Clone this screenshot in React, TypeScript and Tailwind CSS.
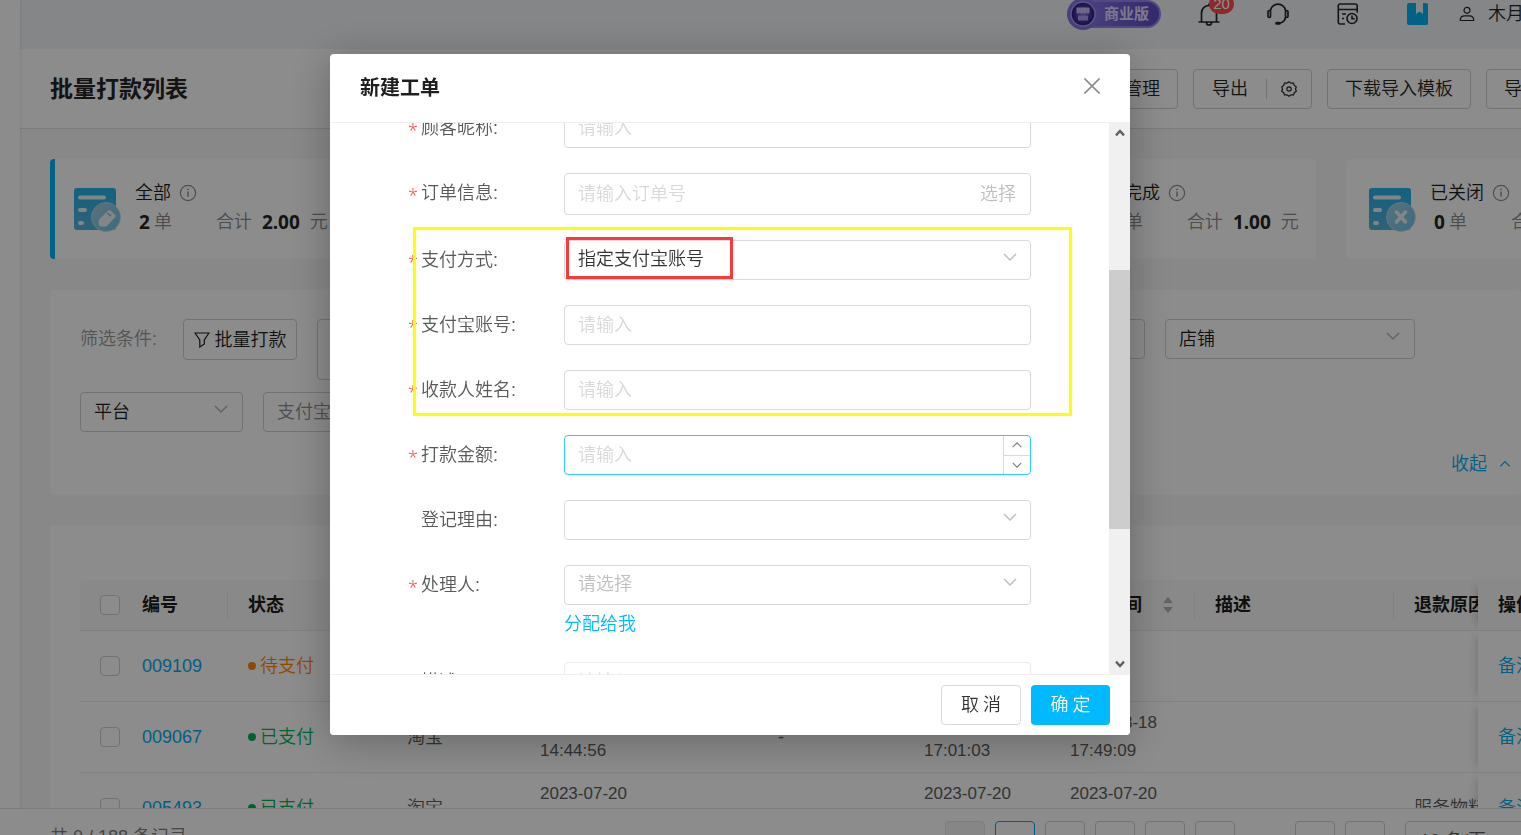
import type { ReactNode } from "react";

interface StatProps {
  label: string;
  count: string;
  total: string;
  kind: "tag" | "clock" | "check" | "close";
  active?: boolean;
}

interface Order {
  id: string;
  status: string;
  color: string;
  platform: string;
  created: string[];
  amount: string;
  paid: string[];
  finished: string[];
  reason: string;
}

const stats: StatProps[] = [
  { label: "全部", count: "2", total: "2.00", kind: "tag", active: true },
  { label: "待支付", count: "1", total: "1.00", kind: "clock" },
  { label: "支付中", count: "0", total: "0.00", kind: "clock" },
  { label: "已完成", count: "1", total: "1.00", kind: "check" },
  { label: "已关闭", count: "0", total: "0.00", kind: "close" },
];

const orders: Order[] = [
  {
    id: "009109",
    status: "待支付",
    color: "text-[#ff8800]",
    platform: "淘宝",
    created: ["2023-08-21", "10:12:30"],
    amount: "-",
    paid: [],
    finished: [],
    reason: "",
  },
  {
    id: "009067",
    status: "已支付",
    color: "text-[#00b456]",
    platform: "淘宝",
    created: ["2023-08-18", "14:44:56"],
    amount: "-",
    paid: ["2023-08-18", "17:01:03"],
    finished: ["2023-08-18", "17:49:09"],
    reason: "",
  },
  {
    id: "005493",
    status: "已支付",
    color: "text-[#00b456]",
    platform: "淘宝",
    created: ["2023-07-20", "11:20:18"],
    amount: "",
    paid: ["2023-07-20", "11:25:40"],
    finished: ["2023-07-20", "11:26:02"],
    reason: "服务物料",
  },
];

const fieldClass =
  "block h-10 w-full rounded border border-[#d9d9d9] bg-white px-[13px] text-[#333] placeholder:text-[#d9d9d9] outline-none";
const toolButton =
  "flex h-10 shrink-0 items-center rounded border border-[#d2d2d2] bg-white px-[17px]";

function Chevron({ up, className }: { up?: boolean; className?: string }) {
  return (
    <svg viewBox="0 0 14 10" fill="none" stroke="currentColor" strokeWidth="1.5" className={className}>
      <path d={up ? "M1 8l6-6 6 6" : "M1 2l6 6 6-6"} />
    </svg>
  );
}

function InfoIcon() {
  return (
    <svg viewBox="0 0 18 18" fill="none" stroke="#8f8f8f" className="size-[18px]">
      <circle cx="9" cy="9" r="7.6" strokeWidth="1.2" />
      <path d="M9 7.6v5.2" strokeWidth="1.4" />
      <circle cx="9" cy="5.3" r=".9" fill="#8f8f8f" stroke="none" />
    </svg>
  );
}

function StatIcon({ kind }: { kind: StatProps["kind"] }) {
  return (
    <svg viewBox="0 0 48 46" className="h-[46px] w-12 shrink-0">
      <defs>
        <linearGradient id={`sheet-${kind}`} x1="0" y1="0" x2="0" y2="1">
          <stop offset="0" stopColor="#22b2e8" />
          <stop offset="1" stopColor="#56b4d8" />
        </linearGradient>
        <linearGradient id={`disc-${kind}`} x1="0" y1="0" x2="1" y2="1">
          <stop offset="0" stopColor="#a5cfe2" />
          <stop offset="1" stopColor="#6bc3e4" />
        </linearGradient>
      </defs>
      <rect x="1" y="1" width="42" height="42" rx="3" fill={`url(#sheet-${kind})`} />
      <g fill="#e9f3f8">
        <rect x="5" y="8.5" width="28" height="4" rx="2" />
        <rect x="5" y="21" width="9" height="4" rx="2" />
        <rect x="5" y="34" width="6" height="4" rx="2" />
      </g>
      <circle cx="33" cy="30" r="14.5" fill={`url(#disc-${kind})`} stroke="#c5dfea" strokeWidth=".8" />
      {kind === "tag" && (
        <path
          d="M26.500 32l8.700-8.600q1-1 2.100 0l5 4.600q1 1 .1 2.100l-8.300 8.600q-.8.800-1.900.8h-4.200q-2.300-.1-2.300-2.400v-3.300q0-1 .8-1.800z"
          fill="#edf4f7"
        />
      )}
      {kind === "tag" && <path d="M34.800 26.300l2.600 2.300" stroke="#8cc4dc" strokeWidth="1.600" strokeLinecap="round" />}
      {kind === "close" && (
        <path d="M28.500 25l9 10M37.500 25l-9 10" stroke="#edf4f7" strokeWidth="3.500" strokeLinecap="round" />
      )}
      {kind === "check" && (
        <path d="M27 30l4.500 4.500 8-8" fill="none" stroke="#edf4f7" strokeWidth="3.500" />
      )}
      {kind === "clock" && (
        <path d="M33 23v8h6" fill="none" stroke="#edf4f7" strokeWidth="3" />
      )}
    </svg>
  );
}

function StatCard({ label, count, total, kind, active }: StatProps) {
  return (
    <article
      className={`flex h-[100px] w-[294px] shrink-0 items-start overflow-hidden rounded bg-white pt-5 ${
        active ? "border-l-[5px] border-[#00b4f5] pl-[18px]" : "pl-[22px]"
      }`}
    >
      <div className="pt-2">
        <StatIcon kind={kind} />
      </div>
      <div className="pl-3.5">
        <h3 className="flex h-[27px] items-center gap-2 text-[#1c1c1c]">
          {label}
          <InfoIcon />
        </h3>
        <p className="flex h-8 items-center pl-1 whitespace-nowrap text-[#8c8c8c]">
          <strong className="mr-1 font-['Noto_Sans',sans-serif] text-[19px] font-bold text-[#262626]">{count}</strong>
          单
          <span className="ml-[44px]">合计</span>
          <strong className="mx-2.5 font-['Noto_Sans',sans-serif] text-[19px] font-bold text-[#262626]">{total}</strong>
          元
        </p>
      </div>
    </article>
  );
}

function TopBar() {
  return (
    <header className="flex h-[49px] items-center overflow-hidden bg-[#f1f4f8] pb-[22px] text-[#262626]">
      <div className="-mr-[3px] ml-auto flex shrink-0 items-center">
        <svg viewBox="0 0 96 34" className="h-[34px] w-24">
          <defs>
            <linearGradient id="plan" x1="0" y1="0" x2="1" y2="0">
              <stop offset="0" stopColor="#8d7bee" />
              <stop offset="1" stopColor="#5b4ac2" />
            </linearGradient>
            <radialGradient id="coin">
              <stop offset="0" stopColor="#8a76dc" />
              <stop offset=".6" stopColor="#4a34a4" />
              <stop offset="1" stopColor="#2a1a78" />
            </radialGradient>
          </defs>
          <rect x="12" y="4" width="82" height="26" rx="13" fill="url(#plan)" stroke="#9484f0" strokeWidth="2" />
          <circle cx="17" cy="17" r="16" fill="#8374e4" />
          <circle cx="17" cy="17" r="12" fill="url(#coin)" stroke="#a99cf4" strokeWidth="1.500" />
          <path d="M10.500 10.500h13v5q-1.600 2.500-3.300 0-1.600 2.500-3.200 0-1.600 2.500-3.200 0-1.700 2.500-3.300 0z" fill="#c9bdf6" />
          <path d="M12 18.500h10v5H12z" fill="#b0a0ee" />
          <text x="38" y="22" fontSize="15" fontWeight="700" fill="#e4dcff">商业版</text>
        </svg>
        <button aria-label="通知" className="relative ml-9">
          <svg viewBox="0 0 22 24" fill="none" stroke="currentColor" strokeWidth="1.700" className="h-6 w-[22px]">
            <path d="M11 1.500v2M3.500 19.500V11a7.500 7.500 0 0 1 15 0v8.500M.5 20h21M8.500 20.500a2.500 2.500 0 0 0 5 0" />
          </svg>
          <span className="absolute -top-2 left-[11px] flex h-5 w-[25px] items-center justify-center rounded-full bg-[#ff4d4f] text-[15px] text-white">
            20
          </span>
        </button>
        <button aria-label="客服" className="ml-[47px]">
          <svg viewBox="0 0 22 22" fill="none" stroke="currentColor" strokeWidth="1.700" className="size-[22px]">
            <path d="M3.500 7.500a7.600 7.600 0 0 1 15 0M18.500 14q-.5 5.500-6.500 6" />
            <rect x="1" y="7.500" width="2.500" height="7" rx="1.200" />
            <rect x="18.500" y="7.500" width="2.500" height="7" rx="1.200" />
            <rect x="9" y="19.500" width="4" height="1.500" rx=".7" />
          </svg>
        </button>
        <button aria-label="记录" className="ml-[48px]">
          <svg viewBox="0 0 22 22" fill="none" stroke="currentColor" strokeWidth="1.600" className="size-[22px]">
            <path d="M8 21H3a1.700 1.700 0 0 1-1.700-1.700V2.700A1.700 1.700 0 0 1 3 1h15.500a1.700 1.700 0 0 1 1.700 1.700v7M1.300 6.500h19M5 11h4M5 15.500h2" />
            <circle cx="15" cy="15.500" r="5" />
            <path d="M15 12.500v3.300h2.700" />
          </svg>
        </button>
        <button aria-label="手册" className="ml-[48px]">
          <svg viewBox="0 0 21 22" className="h-[22px] w-[21px]">
            <path d="M2 0h7v11l3.500-2.500L16 11V0h3a2 2 0 0 1 2 2v18a2 2 0 0 1-2 2H2a2 2 0 0 1-2-2V2a2 2 0 0 1 2-2z" fill="#00b4f5" />
          </svg>
        </button>
        <a href="#user" className="ml-[31px] flex items-center gap-[13px]">
          <svg viewBox="0 0 16 16" fill="none" stroke="currentColor" strokeWidth="1.200" className="size-4">
            <circle cx="8" cy="4.300" r="3" />
            <path d="M1.300 14.500v-1.200q.6-3.500 4.200-3.500h5q3.600 0 4.200 3.500v1.200z" />
          </svg>
          木月
        </a>
      </div>
    </header>
  );
}

function TitleBar() {
  return (
    <div className="flex h-20 items-center justify-between overflow-hidden border-b border-[#e0e0e0] bg-white pl-[30px]">
      <h1 className="shrink-0 text-[23px] font-bold text-[#262626]">批量打款列表</h1>
      <div className="-mr-[37px] flex gap-[15px] text-[#262626]">
        <button className={toolButton}>批量管理</button>
        <div className="flex h-10 items-center rounded border border-[#d2d2d2] bg-white">
          <button className="px-[18px]">导出</button>
          <button aria-label="导出设置" className="flex h-5 items-center border-l border-[#d2d2d2] px-3.5">
            <svg viewBox="0 0 16 16" fill="none" stroke="currentColor" strokeWidth="1.200" className="size-4">
              <path d="M8 .8l2 1.400 2.500-.1.800 2.300 2 1.500-.8 2.100.8 2.200-2 1.500-.8 2.200-2.500-.1L8 15.200l-2-1.400-2.500.1-.8-2.200-2-1.500L1.500 8 .7 5.900l2-1.500.8-2.300L6 2.200z" />
              <circle cx="8" cy="8" r="2.200" />
            </svg>
          </button>
        </div>
        <button className={toolButton}>下载导入模板</button>
        <button className={toolButton}>导入</button>
      </div>
    </div>
  );
}

function FilterSelect({ label, className }: { label: string; className: string }) {
  return (
    <div className={`relative shrink-0 ${className}`}>
      <select aria-label={label} className="h-10 w-full appearance-none rounded border border-[#d2d2d2] bg-white px-[13px] text-[#1c1c1c]">
        <option>{label}</option>
      </select>
      <Chevron className="pointer-events-none absolute top-3 right-[15px] h-2.5 w-3.5 text-[#b5b5b5]" />
    </div>
  );
}

function Filters() {
  return (
    <section className="mt-[31px] rounded bg-white px-[30px] pt-[29px] pb-[19px]">
      <div className="flex items-start">
        <span className="flex h-10 w-[103px] shrink-0 items-center text-[#999]">筛选条件:</span>
        <button className="mr-5 flex h-[41px] w-[114px] shrink-0 items-center justify-center gap-[5px] rounded border border-[#d2d2d2] bg-white text-[#1c1c1c]">
          <svg viewBox="0 0 16 16" fill="none" stroke="currentColor" strokeWidth="1.200" className="size-4">
            <path d="M1 1h14l-4.700 7v4L5.800 15V8z" />
          </svg>
          批量打款
        </button>
        <div className="flex gap-5">
          <input aria-label="工单编号" className="h-[61px] w-[288px] shrink-0 rounded border border-[#d2d2d2] bg-white px-3.5" />
          <FilterSelect label="状态" className="w-[250px]" />
          <FilterSelect label="登记人" className="w-[250px]" />
          <FilterSelect label="店铺" className="w-[250px]" />
        </div>
      </div>
      <div className="mt-3 flex gap-5">
        <FilterSelect label="平台" className="w-[163px]" />
        <input
          aria-label="支付宝账号"
          placeholder="支付宝账号"
          className="h-10 w-[250px] rounded border border-[#d2d2d2] bg-white px-[13px] placeholder:text-[#8f8f8f]"
        />
      </div>
      <button className="mt-5 -mr-5 ml-auto flex h-6 items-center gap-3 text-[#00aef0]">
        收起
        <Chevron up className="h-2 w-3" />
      </button>
    </section>
  );
}

function HeadCell({ children, className = "" }: { children?: ReactNode; className?: string }) {
  return (
    <th className={`h-[51px] overflow-hidden border-b border-[#ebebeb] bg-[#fafafa] p-0 text-left font-bold whitespace-nowrap ${className}`}>
      <div className="flex h-7 items-center border-r border-[#ececec] pl-5">{children}</div>
    </th>
  );
}

function Cell({ children, className = "" }: { children?: ReactNode; className?: string }) {
  return (
    <td className={`h-[71px] overflow-hidden border-b border-[#ebebeb] py-[7px] pl-5 leading-7 whitespace-nowrap ${className}`}>
      {children}
    </td>
  );
}

function Lines({ values }: { values: string[] }) {
  return values.map((value) => (
    <span key={value} className="block text-[17px]">
      {value}
    </span>
  ));
}

const check = "block size-5 appearance-none rounded-sm border border-[#cfcfcf] bg-white";
const pinned = "relative shadow-[-8px_0_8px_-6px_rgba(0,0,0,0.15)]";

function OrderTable() {
  return (
    <section className="mt-[30px] bg-white pt-[55px] pl-[30px]">
      <table className="w-[1498px] table-fixed border-separate border-spacing-0 text-[#5e5e5e]">
        <colgroup>
          <col className="w-[42px]" />
          <col className="w-[106px]" />
          <col className="w-[159px]" />
          <col className="w-[133px]" />
          <col className="w-[238px]" />
          <col className="w-[146px]" />
          <col className="w-[146px]" />
          <col className="w-[145px]" />
          <col className="w-[199px]" />
          <col className="w-[84px]" />
          <col className="w-[100px]" />
        </colgroup>
        <thead className="text-[#1c1c1c]">
          <tr>
            <th className="h-[51px] rounded-tl border-b border-[#ebebeb] bg-[#fafafa] p-0 pl-5">
              <input type="checkbox" aria-label="全选" className={check} />
            </th>
            <HeadCell>编号</HeadCell>
            <HeadCell>状态</HeadCell>
            <HeadCell>平台</HeadCell>
            <HeadCell>创建时间</HeadCell>
            <HeadCell>金额</HeadCell>
            <HeadCell>支付时间</HeadCell>
            <HeadCell>
              完成时间
              <svg viewBox="0 0 10 16" fill="#b5b5b5" className="ml-[21px] h-4 w-2.5 shrink-0">
                <path d="M5 0l5 6H0zM5 16l5-6H0z" />
              </svg>
            </HeadCell>
            <HeadCell>描述</HeadCell>
            <HeadCell>退款原因</HeadCell>
            <th className={`border-b border-[#ebebeb] bg-[#fafafa] p-0 pl-5 text-left font-bold ${pinned}`}>操作</th>
          </tr>
        </thead>
        <tbody>
          {orders.map((order) => (
            <tr key={order.id}>
              <Cell>
                <input type="checkbox" aria-label={order.id} className={check} />
              </Cell>
              <Cell>
                <a href={`#${order.id}`} className="text-[#00aef0]">
                  {order.id}
                </a>
              </Cell>
              <Cell>
                <span className={`flex items-center gap-1 ${order.color}`}>
                  <i className="size-2 rounded-full bg-current" />
                  {order.status}
                </span>
              </Cell>
              <Cell>{order.platform}</Cell>
              <Cell>
                <Lines values={order.created} />
              </Cell>
              <Cell>{order.amount}</Cell>
              <Cell>
                <Lines values={order.paid} />
              </Cell>
              <Cell>
                <Lines values={order.finished} />
              </Cell>
              <Cell />
              <Cell>{order.reason}</Cell>
              <td className={`border-b border-[#ebebeb] bg-white pl-5 ${pinned}`}>
                <a href={`#note-${order.id}`} className="text-[#00aef0]">
                  备注
                </a>
              </td>
            </tr>
          ))}
        </tbody>
      </table>
    </section>
  );
}

function Footer() {
  const page = "flex size-10 shrink-0 items-center justify-center rounded border pt-1";
  const idle = "border-[#d2d2d2]";
  return (
    <footer className="flex h-[27px] shrink-0 items-start justify-between overflow-hidden border-t border-[#e6e6e6] bg-white pl-[50px] text-[#808080]">
      <p className="mt-3.5 h-7 leading-7">共 0 / 188 条记录</p>
      <nav className="mt-3 -mr-3.5 flex gap-2.5">
        <button className={`${page} border-[#e4e4e4] bg-[#f5f5f5]`}>‹</button>
        <button className={`${page} border-[#00aef0] text-[#00aef0]`}>1</button>
        <button className={`${page} ${idle}`}>2</button>
        <button className={`${page} ${idle}`}>3</button>
        <button className={`${page} ${idle}`}>4</button>
        <button className={`${page} ${idle}`}>5</button>
        <span className="flex h-10 w-10 items-center justify-center">•••</span>
        <button className={`${page} ${idle}`}>10</button>
        <button className={`${page} ${idle}`}>›</button>
        <select aria-label="每页条数" className="ml-2.5 h-10 w-[130px] appearance-none rounded border border-[#d2d2d2] pl-3.5 text-[#5e5e5e]">
          <option>10 条/页</option>
        </select>
      </nav>
    </footer>
  );
}

interface FieldProps {
  id: string;
  label: string;
  optional?: boolean;
  children: ReactNode;
}

function Field({ id, label, optional, children }: FieldProps) {
  return (
    <div className="flex items-start">
      <label htmlFor={id} className="flex h-10 w-[156px] items-center text-[#595959]">
        <span className="w-[13px] pt-1 font-['Noto_Sans',sans-serif] text-[#ff4d4f]">{optional ? "" : "*"}</span>
        {label}:
      </label>
      <div className="relative flex-1">{children}</div>
    </div>
  );
}

function FormSelect({ id, value, muted }: { id: string; value: string; muted?: boolean }) {
  return (
    <>
      <select id={id} className={`${fieldClass} appearance-none pb-0.5 ${muted ? "text-[#bfbfbf]" : ""}`}>
        <option>{value}</option>
      </select>
      <Chevron className="pointer-events-none absolute top-3 right-3.5 h-2.5 w-3.5 text-[#bfbfbf]" />
    </>
  );
}

function OrderDialog() {
  return (
    <div role="dialog" aria-labelledby="dialog-title" className="relative w-[800px] overflow-hidden rounded bg-white">
      <div className="flex h-[69px] items-center justify-between border-b border-[#f0f0f0] px-[30px]">
        <h2 id="dialog-title" className="text-xl font-bold text-[#1f1f1f]">
          新建工单
        </h2>
        <button aria-label="关闭" className="pb-1">
          <svg viewBox="0 0 16 16" stroke="#8c8c8c" strokeWidth="1.600" className="size-4">
            <path d="M.5.5l15 15M15.500.5l-15 15" />
          </svg>
        </button>
      </div>

      <div className="flex h-[551px]">
        <div className="flex-1 overflow-hidden">
          <form className="-mt-[15px] flex flex-col gap-[25px] px-[78px]">
            <Field id="nickname" label="顾客昵称">
              <input id="nickname" placeholder="请输入" className={fieldClass} />
            </Field>
            <Field id="order" label="订单信息">
              <div className="flex h-[42px] items-center rounded border border-[#d9d9d9] pr-3.5">
                <input id="order" placeholder="请输入订单号" className="flex-1 px-[13px] outline-none placeholder:text-[#d9d9d9]" />
                <button type="button" className="text-[#bfbfbf]">
                  选择
                </button>
              </div>
            </Field>
            <Field id="method" label="支付方式">
              <FormSelect id="method" value="指定支付宝账号" />
            </Field>
            <Field id="account" label="支付宝账号">
              <input id="account" placeholder="请输入" className={fieldClass} />
            </Field>
            <Field id="payee" label="收款人姓名">
              <input id="payee" placeholder="请输入" className={fieldClass} />
            </Field>
            <Field id="amount" label="打款金额">
              <div className="flex h-10 overflow-hidden rounded border border-[#33c7ff]">
                <input id="amount" placeholder="请输入" className="flex-1 px-[13px] outline-none placeholder:text-[#d9d9d9]" />
                <div className="flex w-[27px] flex-col border-l border-[#d9d9d9] text-[#7a7a7a]">
                  <button type="button" aria-label="增加" className="flex flex-1 items-center justify-center border-b border-[#d9d9d9]">
                    <Chevron up className="h-2 w-2.5" />
                  </button>
                  <button type="button" aria-label="减少" className="flex flex-1 items-center justify-center">
                    <Chevron className="h-2 w-2.5" />
                  </button>
                </div>
              </div>
            </Field>
            <Field id="reason" label="登记理由" optional>
              <FormSelect id="reason" value="" />
            </Field>
            <Field id="handler" label="处理人">
              <FormSelect id="handler" value="请选择" muted />
              <a href="#assign" className="flex h-8 items-center pt-1.5 text-[#00b9ff]">
                分配给我
              </a>
            </Field>
            <Field id="description" label="描述" optional>
              <textarea
                id="description"
                placeholder="请输入"
                className="block h-24 w-full resize-none rounded border border-[#ebebeb] px-[13px] py-1.5 leading-[26px] placeholder:text-[#d9d9d9]"
              />
            </Field>
          </form>
        </div>
        <div className="flex w-[21px] flex-col items-center bg-[#f0f0f0] text-[#606060]">
          <svg viewBox="0 0 12 10" fill="none" stroke="currentColor" strokeWidth="3" className="mt-1.5 h-2 w-3">
            <path d="M1 8l5-5.500L11 8" />
          </svg>
          <div className="mt-[133px] h-[259px] w-full bg-[#cdcdcd]" />
          <svg viewBox="0 0 12 10" fill="none" stroke="currentColor" strokeWidth="3" className="mt-auto mb-1.5 h-2 w-3">
            <path d="M1 2l5 5.500L11 2" />
          </svg>
        </div>
      </div>

      <div className="flex h-[61px] items-center justify-end gap-2.5 border-t border-[#f0f0f0] bg-white px-5">
        <button className="flex h-10 w-20 items-center justify-center gap-1 rounded border border-[#d9d9d9] text-[#333]">
          <span>取</span>
          <span>消</span>
        </button>
        <button className="flex h-10 w-[79px] items-center justify-center gap-1 rounded bg-[#00b9ff] text-white">
          <span>确</span>
          <span>定</span>
        </button>
      </div>

      <div className="pointer-events-none absolute top-[173px] left-[83px] h-[189px] w-[659px] border-3 border-[#ffff00]" />
      <div className="pointer-events-none absolute top-[183px] left-[236px] h-[42px] w-[167px] border-3 border-[#fb3939]" />
    </div>
  );
}

export default function App() {
  return (
    <div className="relative flex h-screen flex-col overflow-hidden bg-[#f8f8f8] font-['Liberation_Sans','Noto_Sans_CJK_SC',sans-serif] text-lg/6 font-[350]">
      <div className="flex min-h-0 flex-1">
        <aside className="z-10 w-5 shrink-0 bg-white shadow-[1px_0_3px_rgba(0,0,0,0.07)]" />
        <div className="min-w-0 flex-1 overflow-hidden">
          <TopBar />
          <TitleBar />
          <main className="pt-[30px] pl-[30px]">
            <div className="flex gap-[30px]">
              {stats.map((stat) => (
                <StatCard key={stat.label} {...stat} />
              ))}
            </div>
            <Filters />
            <OrderTable />
          </main>
        </div>
      </div>
      <Footer />
      <div className="fixed inset-0 z-20 flex items-start justify-center bg-black/45 pt-[54px] pr-[61px]">
        <div className="rounded shadow-[0_6px_44px_rgba(0,0,0,0.28)]">
          <OrderDialog />
        </div>
      </div>
    </div>
  );
}
